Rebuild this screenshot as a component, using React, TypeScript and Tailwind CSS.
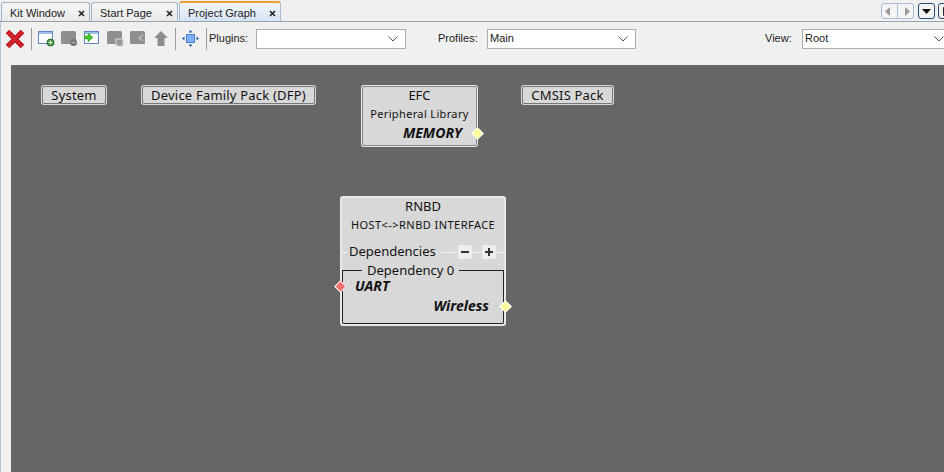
const font = "[font-family:'Noto_Sans','DejaVu_Sans',sans-serif]";
const uiFont = "[font-family:'Liberation_Sans',sans-serif]";

const Close = () => (
  <svg width="7" height="7" viewBox="0 0 7 7" className="ml-auto shrink-0">
    <path d="M1 1l5 5M6 1l-5 5" stroke="#222" strokeWidth="1.6" />
  </svg>
);

const Tab = ({ label, active, width }: { label: string; active?: boolean; width: string }) => (
  <div
    className={`${width} shrink-0 flex items-center pl-[8px] pr-[4px] pt-[3px] border border-b-0 rounded-t-[3px] text-[11px] whitespace-nowrap text-[#222] ${uiFont} ${
      active
        ? "h-[20px] pt-[2px] border-[#a9bed2] border-t-[#f0a030] border-t-2 bg-gradient-to-b from-[#f2f6fb] to-[#d5e3f3]"
        : "h-[19px] border-[#9fb4c7] bg-gradient-to-b from-[#f6f6f6] to-[#e9e9e9]"
    }`}
  >
    <span>{label}</span>
    <Close />
  </div>
);

const WinIcon = ({ badge, blue }: { badge?: React.ReactNode; blue?: boolean }) => (
  <svg width="17" height="17" viewBox="0 0 17 17" className="shrink-0">
    {blue ? (
      <>
        <rect x="0.5" y="1.5" width="14" height="12" fill="#fff" stroke="#5f87c5" />
        <rect x="1" y="2" width="13" height="2" fill="#9cc0ea" />
      </>
    ) : (
      <rect x="0" y="1" width="15" height="13" rx="1.5" fill="#8f8f8f" />
    )}
    {badge}
  </svg>
);

const Sep = ({ className }: { className: string }) => <div className={`w-px h-[22px] shrink-0 bg-[#9a9a9a] ${className}`} />;

const Select = ({ value, width }: { value?: string; width: string }) => (
  <div className={`${width} h-[20px] shrink-0 flex items-center pl-[2px] pr-[7px] bg-white border border-[#abadb3] text-[11px] text-[#222]`}>
    <span>{value}</span>
    <svg width="10" height="6" viewBox="0 0 10 6" className="ml-auto">
      <path d="M0.5 0.5L5 5l4.5-4.5" fill="none" stroke="#555" />
    </svg>
  </div>
);

const Port = ({ color, className }: { color: string; className: string }) => (
  <div className={`absolute w-[9px] h-[9px] rotate-45 border border-white ${color} ${className}`} />
);

const Pill = ({ label, className }: { label: string; className: string }) => (
  <div className={`absolute h-[20px] pt-px flex items-center justify-center rounded-[3px] border-2 border-[#d6d6d6] outline outline-1 -outline-offset-2 outline-[#777] bg-[#d8d8d8] text-[13px] tracking-[0.2px] text-[#111] ${className}`}>
    {label}
  </div>
);

export default function App() {
  return (
    <div className={`w-[944px] h-[472px] overflow-hidden flex flex-col bg-[#f0f0f0] ${font}`}>
      <div className="h-[22px] shrink-0 flex items-end gap-px pl-[1px] border-b border-[#8fa6ba] bg-[#f0f0f0]">
        <Tab label="Kit Window" width="w-[89px]" />
        <Tab label="Start Page" width="w-[87px]" />
        <Tab label="Project Graph" width="w-[102px]" active />
        <div className="ml-auto shrink-0 flex items-center gap-[3px] mb-[2px] -mr-[10px]">
          <div className="w-[33px] h-[16px] flex items-center justify-around rounded-[3px] border border-[#a9bed2] bg-[#f4f4f4]">
            <svg width="5" height="9" viewBox="0 0 5 9"><path d="M5 0v9L0 4.500z" fill="#999" /></svg>
            <div className="w-px h-[14px] bg-[#a9bed2]" />
            <svg width="5" height="9" viewBox="0 0 5 9"><path d="M0 0v9l5-4.500z" fill="#999" /></svg>
          </div>
          <div className="ml-px w-[17px] h-[16px] flex items-center justify-center rounded-[3px] border border-[#1f4a7a] bg-[#f4f4f4]">
            <svg width="9" height="5" viewBox="0 0 9 5"><path d="M0 0h9L4.500 5z" fill="#111" /></svg>
          </div>
          <div className="w-[16px] h-[16px] rounded-[3px] border border-[#1f4a7a] bg-[#f4f4f4] flex items-center justify-center">
            <div className="w-[7px] h-[9px] border border-[#222] rounded-r-[3px]" />
          </div>
        </div>
      </div>

      <div className={`flex-1 flex flex-col border-l border-[#b4c8dc] ${font}`}>
        <div className={`h-[43px] shrink-0 flex items-center pl-[4px] pb-[11px] border-t border-[#f5f2e4] text-[11px] text-[#222] ${uiFont}`}>
          <svg width="20" height="20" viewBox="0 0 20 20" className="shrink-0 mr-px">
            <path d="M2.500 2.500l15 15M17.500 2.500l-15 15" stroke="#b01018" strokeWidth="5" />
            <path d="M3 3l14 14M17 3L3 17" stroke="#d8252c" strokeWidth="2.500" />
          </svg>
          <Sep className="ml-[5px] mr-[6px]" />
          <div className="flex items-center gap-[6px] shrink-0">
            <WinIcon blue badge={<><circle cx="12.500" cy="12.500" r="3.500" fill="#3f9a3f" stroke="#2a6f2a" /><path d="M10.500 12.500h4M12.500 10.500v4" stroke="#fff" /></>} />
            <WinIcon badge={<><circle cx="12.500" cy="12.500" r="3.500" fill="#777" /><path d="M10.500 12.500h4" stroke="#bbb" /></>} />
            <WinIcon blue badge={<path d="M0 6h4V3l5 4.500L4 12V9H0z" fill="#45c42f" stroke="#2f8f24" strokeWidth="0.5" />} />
            <WinIcon badge={<rect x="9" y="9" width="7" height="7" fill="#9a9a9a" stroke="#ddd" />} />
            <WinIcon badge={<path d="M13 5L9 8l4 3" fill="none" stroke="#ddd" />} />
            <svg width="16" height="17" viewBox="0 0 16 17" className="shrink-0">
              <path d="M8 1l7 7h-3.500v8h-7V8H1z" fill="#8c8c8c" />
            </svg>
          </div>
          <Sep className="ml-[6px] mr-[6px]" />
          <svg width="17" height="17" viewBox="0 0 17 17" className="shrink-0">
            <rect x="4.500" y="4.500" width="8" height="8" fill="#7fb0f5" stroke="#4a7fd0" />
            <path d="M8.500 0l2 2.500h-4zM8.500 17l2-2.500h-4zM0 8.500l2.500-2v4zM17 8.500l-2.500-2v4z" fill="#2a5fb0" />
          </svg>
          <Sep className="ml-[7px] mr-[2px]" />
          <span className="w-[47px] shrink-0">Plugins:</span>
          <Select width="w-[150px]" />
          <span className="ml-[32px] w-[49px] shrink-0">Profiles:</span>
          <Select value="Main" width="w-[149px]" />
          <span className="ml-[129px] w-[37px] shrink-0">View:</span>
          <Select value="Root" width="w-[150px]" />
        </div>

        <div className="flex-1 flex">
          <div className="w-[10px] shrink-0" />
          <div className="relative flex-1 bg-[#666666] overflow-hidden">
            <Pill label="System" className="left-[30px] top-[20px] w-[66px]" />
            <Pill label="Device Family Pack (DFP)" className="left-[130px] top-[20px] w-[175px]" />
            <Pill label="CMSIS Pack" className="left-[510px] top-[20px] w-[93px]" />

            <div className="absolute left-[350px] top-[20px] w-[117px] h-[62px] rounded-[3px] border-2 border-[#e8e8e8] outline outline-1 -outline-offset-2 outline-[#888] bg-[#d8d8d8] text-[#111]">
              <div className="text-center text-[13px] leading-[18px] -mt-px">EFC</div>
              <div className="text-center text-[11px] leading-[14px] mt-[3px] tracking-[0.35px] whitespace-nowrap">Peripheral Library</div>
              <div className="text-right pr-[14px] mt-[3px] text-[14px] leading-[18px] font-bold italic">MEMORY</div>
              <Port color="bg-[#ffff99]" className="right-[-6px] top-[42px]" />
            </div>

            <div className="absolute left-[329px] top-[131px] w-[166px] h-[130px] rounded-[3px] border-2 border-[#e8e8e8] bg-[#d8d8d8] text-[#111]">
              <div className="text-center text-[13px] leading-[18px] -mt-px">RNBD</div>
              <div className="text-center text-[11px] leading-[14px] mt-[3px] tracking-[0.45px] whitespace-nowrap">HOST&lt;-&gt;RNBD INTERFACE</div>
              <div className="flex items-center mt-[11px] h-[18px] text-[13px] -mr-px">
                <div className="w-[5px] h-px bg-[#f4f4f4]" />
                <span className="px-[2px]">Dependencies</span>
                <div className="w-[16px] h-px ml-[3px] bg-[#f4f4f4]" />
                <div className="ml-px w-[14px] h-[14px] bg-[#eee] flex items-center justify-center rounded-[2px]">
                  <svg width="10" height="10" viewBox="0 0 10 10"><path d="M1 5h8" stroke="#333" strokeWidth="2" /></svg>
                </div>
                <div className="w-[10px] h-px bg-[#f4f4f4]" />
                <div className="w-[14px] h-[14px] bg-[#eee] flex items-center justify-center rounded-[2px]">
                  <svg width="10" height="10" viewBox="0 0 10 10"><path d="M1 5h8M5 1v8" stroke="#333" strokeWidth="2" /></svg>
                </div>
                <div className="flex-1 h-px bg-[#f4f4f4]" />
              </div>
              <div className="relative h-[62px] mt-px">
                <div className="flex items-center text-[13px] leading-[16px]">
                  <div className="w-[20px] h-px bg-[#222]" />
                  <span className="px-[5px]">Dependency 0</span>
                  <div className="flex-1 h-px bg-[#222]" />
                </div>
                <div className="absolute left-0 top-[8px] bottom-0 right-0 border-x border-b border-[#222] rounded-b-[2px]" />
                <div className="pl-[13px] text-[14px] leading-[16px] font-bold italic">UART</div>
                <div className="text-right pr-[15px] text-[14px] leading-[16px] font-bold italic mt-[4px]">Wireless</div>
                <Port color="bg-[#f07070]" className="left-[-6px] top-[20px]" />
                <Port color="bg-[#ffff99]" className="right-[-6px] top-[40px]" />
              </div>
            </div>
          </div>
        </div>
      </div>
    </div>
  );
}
